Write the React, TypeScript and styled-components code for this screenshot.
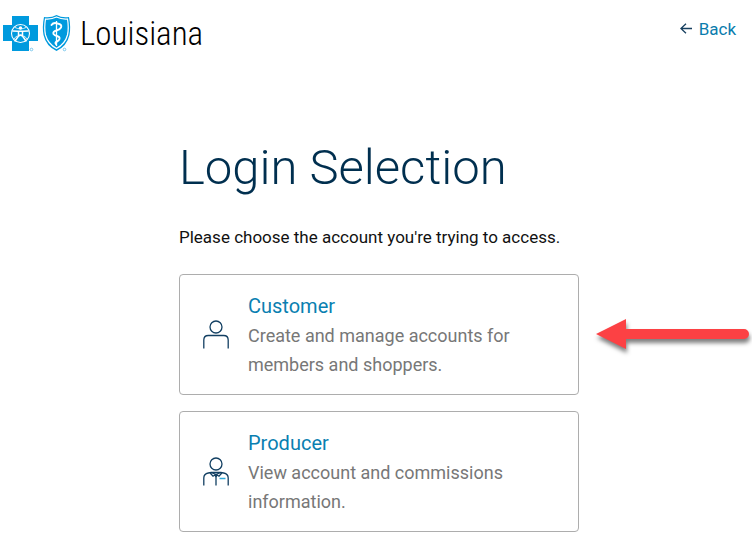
import React from 'react';
import styled, { createGlobalStyle } from 'styled-components';

const GlobalStyle = createGlobalStyle`
  *, *::before, *::after { box-sizing: border-box; }
  body {
    margin: 0;
    background: #fff;
    color: #111;
    font-family: Roboto, "Liberation Sans", sans-serif;
    overflow-x: hidden;
  }
`;

const Header = styled.header`
  display: flex;
  align-items: flex-start;
  justify-content: space-between;
  padding: 12px 16px 0 3px;
`;

const Brand = styled.a`
  display: flex;
  align-items: center;
  gap: 9px;
  color: #000;
  text-decoration: none;
`;

const BrandName = styled.span`
  padding-top: 2px;
  font-family: "Roboto Condensed", Roboto, sans-serif;
  font-size: 33px;
  font-weight: 300;
  line-height: 40px;
`;

const BackLink = styled.a`
  display: flex;
  align-items: center;
  gap: 7px;
  padding-top: 5px;
  color: #0a7cad;
  font-size: 17px;
  line-height: 24px;
  text-decoration: none;
`;

const Main = styled.main`
  width: 100%;
  max-width: 406px;
  margin: 0 auto;
  padding: 84px 0 16px 6px;
`;

const Title = styled.h1`
  margin: 0;
  color: #002f4f;
  font-size: 49px;
  font-weight: 300;
  line-height: 60px;
  white-space: nowrap;
`;

const Intro = styled.p`
  margin: 27px 0 25px;
  font-size: 17px;
  line-height: 24px;
`;

const AccountList = styled.ul`
  display: flex;
  flex-direction: column;
  gap: 16px;
  margin: 0;
  padding: 0;
  list-style: none;
`;

const AccountItem = styled.li`
  position: relative;
`;

const AccountCard = styled.a`
  display: flex;
  align-items: center;
  gap: 19px;
  padding: 17px 23px 15px;
  border: 1px solid #adadad;
  border-radius: 4px;
  color: #777;
  text-decoration: none;

  > svg {
    margin-bottom: 2px;
  }
`;

const AccountText = styled.span`
  flex: 1;
  font-size: 18px;
  line-height: 29px;
`;

const AccountName = styled.span`
  display: block;
  color: #0a7fb1;
  font-size: 20px;
  line-height: 29px;
`;

const Pointer = styled.svg`
  position: absolute;
  top: 50%;
  left: 100%;
  margin: -16px 0 0 12px;
  overflow: visible;
  filter: drop-shadow(1px 4px 2px rgba(0, 0, 0, 0.5));
`;

const CrossShield = () => (
  <svg width="68" height="38" viewBox="0 0 68 38" aria-hidden="true">
    <path fill="#009ade" d="M9 2h17v9h9v16h-9v10H9V27H0V11h9z" />
    <g fill="none" stroke="#fff" strokeLinecap="round" strokeLinejoin="round">
      <circle cx="17.5" cy="19.5" r="9" strokeWidth="1.1" />
      <path strokeWidth="1.5" d="M10 17l5 .3h5l5-.3M15.500 18v4L12 27M19.500 18v4l3.500 5M15.500 22l2-1 2 1" />
      <path strokeWidth=".8" d="M12 13.500q5.500 3 11 0M11 25q1-2 3-3M24 25q-1-2-3-3" />
    </g>
    <circle cx="17.500" cy="14" r="1.700" fill="#fff" />
    <path fill="#009ade" d="M41 3q7 1 12.500-2Q59 4 66 3q2 10 .500 18Q64 32 53.500 37 43 32 40.500 21 39 13 41 3z" />
    <path fill="none" stroke="#fff" strokeWidth="1.200" d="M42.500 5q6 .500 11-2 5 2.500 11 2 1.500 9 0 16-2.500 9-11 13.500Q45 30 42.500 21q-1.500-7 0-16z" />
    <path stroke="#fff" strokeWidth="1.300" d="M53.500 7v25" />
    <path fill="none" stroke="#fff" strokeWidth="1.900" strokeLinecap="round" d="M48.500 11q2-3 6-1.500 5 1 3.500 4-1 2-4.500 3-4 1-3 3.500 1 1.500 3.500 2 3 .800 2.500 3-.500 1.700-2.500 2.500-2.500 1-1 2.500" />
    <circle cx="28.500" cy="35.500" r="1.300" fill="none" stroke="#62bce8" strokeWidth=".8" />
    <circle cx="61.500" cy="35.500" r="1.300" fill="none" stroke="#62bce8" strokeWidth=".8" />
  </svg>
);

const BackArrow = () => (
  <svg width="12" height="12" viewBox="0 0 12 12" fill="none" stroke="#173f5f" strokeWidth="1.3" aria-hidden="true">
    <path d="M6 .8L.9 5.500 6 10.200M1 5.500h11" />
  </svg>
);

const CustomerIcon = () => (
  <svg width="26" height="29" viewBox="0 0 26 29" fill="none" stroke="#123f62" strokeWidth="1.300" aria-hidden="true">
    <circle cx="13" cy="7" r="6" />
    <path d="M.8 28.500V20q0-4.500 4.500-4.500h15.400q4.500 0 4.500 4.500v8.500" />
  </svg>
);

const ProducerIcon = () => (
  <svg width="26" height="29" viewBox="0 0 26 29" fill="none" stroke="#123f62" strokeWidth="1.300" aria-hidden="true">
    <circle cx="13" cy="7" r="6" />
    <path d="M.8 28.500V21q0-4 4.500-5l3.200-.500h9l3.200.500q4.500 1 4.500 5v7.500M13 19v9.500" />
    <path d="M8.500 15.200l-1 1.300L10 19.200l3-2 3 2 2.500-2.700-1-1.300M8.500 15.500l4.500 2 4.500-2M11.700 18l1.300 1.500 1.300-1.500" />
    <path stroke="#2ea8d8" strokeWidth="1.500" d="M16.500 21.500h6" />
  </svg>
);

interface Account {
  name: string;
  description: string;
  icon: React.ReactNode;
  highlighted?: boolean;
}

const accounts: Account[] = [
  {
    name: 'Customer',
    description: 'Create and manage accounts for members and shoppers.',
    icon: <CustomerIcon />,
    highlighted: true,
  },
  {
    name: 'Producer',
    description: 'View account and commissions information.',
    icon: <ProducerIcon />,
  },
];

export default function App() {
  return (
    <>
      <GlobalStyle />
      <Header>
        <Brand href="#home">
          <CrossShield />
          <BrandName>Louisiana</BrandName>
        </Brand>
        <BackLink href="#back">
          <BackArrow />
          Back
        </BackLink>
      </Header>
      <Main>
        <Title>Login Selection</Title>
        <Intro>Please choose the account you're trying to access.</Intro>
        <AccountList>
          {accounts.map((account) => (
            <AccountItem key={account.name}>
              <AccountCard href={`#${account.name.toLowerCase()}`}>
                {account.icon}
                <AccountText>
                  <AccountName>{account.name}</AccountName>
                  {account.description}
                </AccountText>
              </AccountCard>
              {account.highlighted && (
                <Pointer width="158" height="30" viewBox="0 0 158 30" aria-hidden="true">
                  <path fill="#fc4144" d="M5 15L35 0v10h118a5 5 0 0 1 0 10H35v10z" />
                </Pointer>
              )}
            </AccountItem>
          ))}
        </AccountList>
      </Main>
    </>
  );
}
